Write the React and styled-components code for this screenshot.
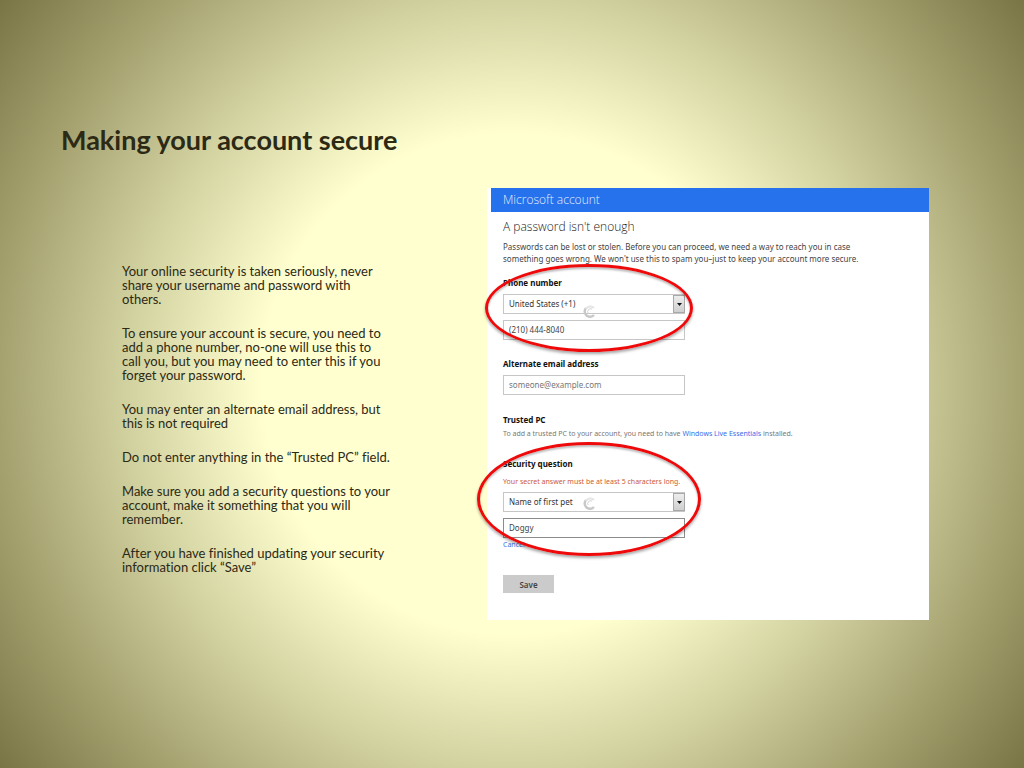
import React from 'react';
import styled, { createGlobalStyle } from 'styled-components';

const GlobalStyle = createGlobalStyle`
  * {
    box-sizing: border-box;
  }

  body {
    margin: 0;
    font-family: Lato, "Open Sans", sans-serif;
    color: #2c2914;
  }
`;

const Slide = styled.main`
  min-height: 100vh;
  padding: 120px 95px 148px 61px;
  background: radial-gradient(circle farthest-corner at 50% 50%, #ffffd0 0%, #ffffd0 39%, #d2d1a0 60%, #a5a270 80%, #7a7544 100%);
`;

const Title = styled.h1`
  margin: 0 0 28px;
  font-size: 27px;
  line-height: 40px;
  font-weight: bold;
`;

const Content = styled.div`
  display: flex;
  justify-content: space-between;
  align-items: flex-start;
`;

const Notes = styled.div`
  width: 332px;
  padding: 76px 0 0 61px;
  font-variant-ligatures: none;
`;

const Note = styled.p`
  margin: 0 0 20px;
  font-size: 13px;
  line-height: 14px;
`;

const Card = styled.section`
  width: 442px;
  padding-bottom: 27px;
  background-color: white;
  font-family: "Noto Sans", "Open Sans", sans-serif;
  color: #444;
`;

const CardHeader = styled.header`
  margin-left: 4px;
  padding-left: 12px;
  background-color: #2672ec;
  color: #e2edff;
  font-family: "Open Sans", sans-serif;
  font-size: 12px;
  font-weight: 300;
  line-height: 24px;
`;

const Form = styled.form`
  padding: 7px 16px 0;
`;

const Heading = styled.h2`
  margin: 0 0 6px;
  font-family: "Open Sans", sans-serif;
  font-size: 12px;
  line-height: 16px;
  font-weight: 300;
  color: #222;
`;

const Intro = styled.p`
  max-width: 370px;
  margin: 0;
  font-size: 8px;
  line-height: 12px;
`;

const Group = styled.div`
  position: relative;
  display: flex;
  flex-direction: column;
  align-items: flex-start;
  width: 182px;
  margin-top: ${props => props.$gap}px;
`;

const Label = styled.label`
  margin-bottom: 5px;
  font-size: 8px;
  line-height: 12px;
  font-weight: bold;
  color: #111;
`;

const SectionTitle = styled.h3`
  margin: 0 0 1px;
  font-size: 8px;
  line-height: 12px;
  font-weight: bold;
  color: #111;
`;

const Field = styled.input`
  width: 100%;
  height: 20px;
  padding: 0 5px 1px;
  border: 1px solid ${props => props.$edge || '#c6c6c6'};
  border-radius: 0;
  background-color: white;
  font-family: inherit;
  font-size: 8px;
  color: #444;

  &::placeholder {
    color: #777;
  }
`;

const SelectBox = styled.div`
  position: relative;
  width: 100%;
  margin-bottom: 6px;
`;

const Select = styled.select`
  display: block;
  width: 100%;
  height: 20px;
  padding: 0 5px 1px;
  border: 1px solid #c6c6c6;
  border-radius: 0;
  background-color: white;
  appearance: none;
  font-family: inherit;
  font-size: 8px;
  color: #333;
`;

const Arrow = styled.span`
  position: absolute;
  top: 1px;
  right: 0;
  display: flex;
  align-items: center;
  justify-content: center;
  width: 12px;
  height: 18px;
  border: 1px solid #a8a8a8;
  background: linear-gradient(#ededed, #cfcfcf);
  pointer-events: none;
`;

const Spinner = styled.svg`
  position: absolute;
  left: 80px;
  top: ${props => props.$top}px;
  width: 14px;
  height: 14px;
  pointer-events: none;
`;

const Small = styled.p`
  margin: 0;
  font-size: 7px;
  line-height: 14px;
  color: #777;
  white-space: nowrap;
`;

const ErrorText = styled(Small)`
  margin-bottom: 3px;
  color: #cc5a35;
`;

const Link = styled.a`
  color: #3a6ee8;
  font-size: 7px;
  line-height: 14px;
  text-decoration: none;
`;

const Save = styled.button`
  display: block;
  width: 51px;
  height: 18px;
  margin-top: 23px;
  padding: 0;
  border: none;
  background-color: #cbcbcb;
  font-family: inherit;
  font-size: 8px;
  font-weight: 600;
  color: #444;
`;

// red ring laid over the fields being described
const Ring = styled.span`
  position: absolute;
  top: ${props => props.$top}px;
  left: 50%;
  width: ${props => props.$width}px;
  height: ${props => props.$height}px;
  margin-left: -${props => props.$width / 2 + 5}px;
  border: 3px solid #ee0a0a;
  border-radius: 50%;
  box-shadow: 0 2px 3px rgba(0, 0, 0, 0.35), inset 0 2px 2px rgba(0, 0, 0, 0.25);
  pointer-events: none;
`;

const notes = [
  'Your online security is taken seriously, never share your username and password with others.',
  'To ensure your account is secure, you need to add a phone number, no-one will use this to call you, but you may need to enter this if you forget your password.',
  'You may enter an alternate email address, but this is not required',
  'Do not enter anything in the “Trusted PC” field.',
  'Make sure you add a security questions to your account, make it something that you will remember.',
  'After you have finished updating your security information click “Save”',
];

const Dropdown = ({ id, option, spinnerTop }) => {
  return (
    <SelectBox>
      <Select id={id}>
        <option>{option}</option>
      </Select>
      <Arrow>
        <svg width="5" height="3" viewBox="0 0 5 3">
          <path d="M0 0h5L2.5 3z" fill="#111" />
        </svg>
      </Arrow>
      <Spinner $top={spinnerTop} viewBox="0 0 14 14" fill="none">
        <path d="M3 4A5 5 0 0 0 11 11" stroke="#c8c8c8" strokeWidth="2.4" />
        <path d="M3 5A5 5 0 0 1 11 4" stroke="#e4e4e4" strokeWidth="2" />
        <path d="M5 9A3 3 0 0 1 9 5" stroke="#d4d4d4" strokeWidth="1" />
      </Spinner>
    </SelectBox>
  )
}

const App = () => {
  return (
    <>
      <GlobalStyle />
      <Slide>
        <Title>Making your account secure</Title>

        <Content>
          <Notes>
            {notes.map(note => (
              <Note key={note}>{note}</Note>
            ))}
          </Notes>

          <Card>
            <CardHeader>Microsoft account</CardHeader>

            <Form onSubmit={e => e.preventDefault()}>
              <Heading>A password isn't enough</Heading>
              <Intro>
                Passwords can be lost or stolen. Before you can proceed, we need a way to reach you in case something goes wrong. We won't use this to spam you–just to keep your account more secure.
              </Intro>

              <Group $gap={12}>
                <Label htmlFor="country">Phone number</Label>
                <Dropdown id="country" option="United States (+1)" spinnerTop={10} />
                <Field type="tel" aria-label="Phone number" defaultValue="(210) 444-8040" />
                <Ring $top={-13} $width={208} $height={88} />
              </Group>

              <Group $gap={18}>
                <Label htmlFor="email">Alternate email address</Label>
                <Field id="email" type="email" placeholder="someone@example.com" />
              </Group>

              <Group $gap={19}>
                <SectionTitle>Trusted PC</SectionTitle>
                <Small>
                  To add a trusted PC to your account, you need to have <Link href="#">Windows Live Essentials</Link> installed.
                </Small>
              </Group>

              <Group $gap={17}>
                <Label htmlFor="question">Security question</Label>
                <ErrorText>Your secret answer must be at least 5 characters long.</ErrorText>
                <Dropdown id="question" option="Name of first pet" spinnerTop={4} />
                <Field aria-label="Secret answer" defaultValue="Doggy" $edge="#8c8c8c" />
                <Link href="#">Cancel</Link>
                <Ring $top={-16} $width={224} $height={114} />
              </Group>

              <Save type="submit">Save</Save>
            </Form>
          </Card>
        </Content>
      </Slide>
    </>
  )
}

export default App;
